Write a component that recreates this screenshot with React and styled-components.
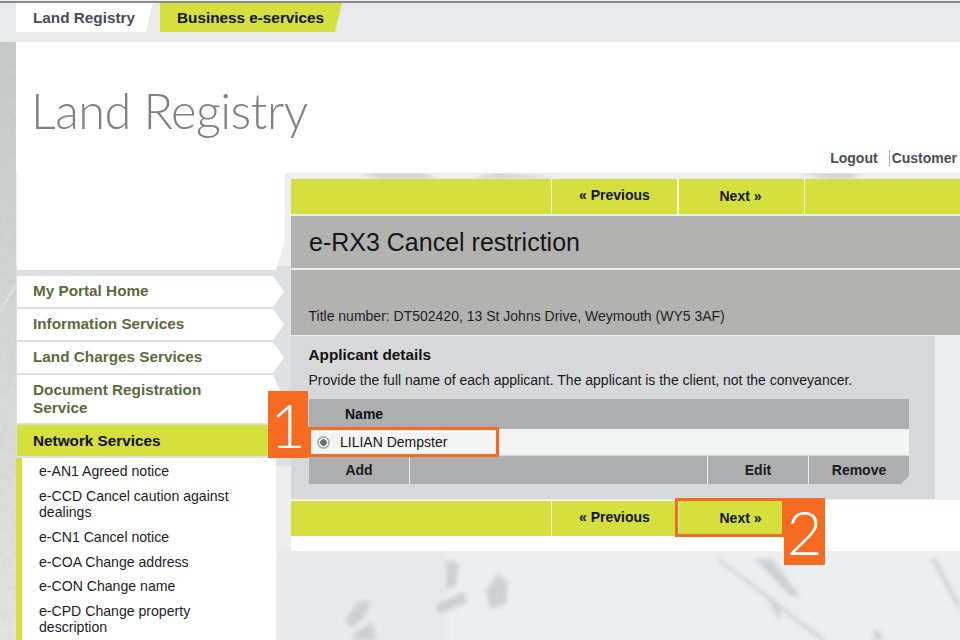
import React from 'react';
import styled, { createGlobalStyle } from 'styled-components';

const lime = '#d5df3e';
const orange = '#f66a21';
const band = '#b2b2b1';
const tableGrey = '#adaeb0';

const GlobalStyle = createGlobalStyle`
    html, body {
        margin: 0;
        height: 640px;
        overflow: hidden;
        background: #edeef0;
        font-family: "Liberation Sans", Arial, sans-serif;
    }
`;

const Texture = styled.svg`
    position: absolute;
    left: 0;
    top: 0;
    z-index: 0;
`;

const Page = styled.div`
    position: relative;
    z-index: 1;
    width: 960px;
    height: 640px;
    overflow: hidden;
`;

const TopBar = styled.div`
    height: 39px;
    margin-top: 1px;
    border-top: 2px solid #8c8c8c;
    padding-left: 16px;
    background: #e9eaec;
    display: flex;
    align-items: flex-start;
    gap: 7px;
    box-sizing: content-box;
`;

const Tab = styled.div`
    height: 29px;
    box-sizing: border-box;
    padding-left: 17px;
    width: ${p => (p.$active ? '182px' : '137px')};
    background: ${p => (p.$active ? lime : '#fff')};
    color: ${p => (p.$active ? '#111' : '#4a4c58')};
    font-size: 15.3px;
    font-weight: bold;
    line-height: 29px;
    white-space: nowrap;
    clip-path: polygon(0 0, 100% 0, calc(100% - 7px) 100%, 0 100%);
`;

const Header = styled.header`
    margin-left: 16px;
    height: 131px;
    background: #fff;
    display: flex;
    flex-direction: column;
    padding: 38px 3px 0 15px;
    box-sizing: border-box;
`;

const Logo = styled.div`
    font-family: Lato, "Open Sans", sans-serif;
    font-weight: 300;
    font-size: 48.7px;
    line-height: 60px;
    color: #808184;
    letter-spacing: -0.5px;
`;

const UserLinks = styled.div`
    margin-top: 10px;
    display: flex;
    justify-content: flex-end;
    align-items: center;
    font-size: 14px;
    font-weight: bold;
    color: #4c4e58;
    line-height: 16px;
`;

const UserLink = styled.span`
    padding-left: ${p => (p.$split ? '2px' : '0')};
    margin-left: ${p => (p.$split ? '11px' : '0')};
    border-left: ${p => (p.$split ? '1px solid #aaa' : '0')};
`;

const Content = styled.div`
    display: flex;
    margin-left: 17px;
`;

const Sidebar = styled.nav`
    width: 268px;
    flex: none;
    display: flex;
    flex-direction: column;
`;

const SideTop = styled.div`
    height: 97px;
    margin-bottom: 6px;
    background: #fff;
    clip-path: polygon(0 0, 100% 0, 100% 70%, 259px 100%, 0 100%);
`;

const NavItem = styled.div`
    min-height: 31px;
    box-sizing: border-box;
    margin-bottom: 2px;
    padding: ${p => (p.$active ? '7px 60px 5px 16px' : '6px 60px 6px 16px')};
    background: ${p => (p.$active ? lime : '#fff')};
    color: ${p => (p.$active ? '#111' : '#5b6b3d')};
    font-size: 15.3px;
    font-weight: bold;
    line-height: 18px;
    clip-path: polygon(0 0, 256px 0, 267px 50%, 256px 100%, 0 100%);
`;

const SubList = styled.ul`
    list-style: none;
    margin: 0 0 0 -1px;
    padding: 5px 30px 0 17px;
    width: 260px;
    box-sizing: border-box;
    background: #fff;
    border-left: 6px solid ${lime};
    height: 200px;
`;

const SubItem = styled.li`
    font-size: 14.1px;
    line-height: 16px;
    padding-bottom: 8.85px;
    color: #1d1d1f;
`;

const Main = styled.main`
    flex: 1;
    position: relative;
    padding: 6px 0 0 6px;
    min-width: 0;
`;

const Toolbar = styled.div`
    position: relative;
    height: 35px;
    width: ${p => (p.$short ? '513px' : 'auto')};
    background: ${lime};
    display: grid;
    grid-template-columns: 260px 126px 127px 1fr;
`;

const ToolCell = styled.div`
    border-left: ${p => (p.$first ? '0' : `${p.$wide ? 2 : 1}px solid #f6f8d8`)};
    padding-right: ${p => (p.$wide ? 2 : 0)}px;
    font-size: 14px;
    font-weight: bold;
    line-height: ${p => (p.$wide ? 35 : 33)}px;
    text-align: center;
    color: #141414;
`;

const TitleBand = styled.div`
    margin-top: 2px;
    height: 52px;
    background: ${band};
    padding-left: 18px;
    font-size: 25px;
    line-height: 52px;
    color: #161616;
`;

const InfoBand = styled.div`
    margin-top: 2px;
    height: 65px;
    background: ${band};
    padding: 38px 0 0 17.5px;
    box-sizing: border-box;
    font-size: 14px;
    line-height: 16px;
    color: #1f1f1f;
`;

const Panel = styled.section`
    margin-top: 1px;
    width: 644px;
    height: 163px;
    box-sizing: border-box;
    padding: 11px 26px 0 17.5px;
    background: #d7d8da;
`;

const PanelHeading = styled.h2`
    margin: 0;
    font-size: 15.3px;
    line-height: 16px;
    color: #111;
`;

const PanelText = styled.p`
    margin: 9px 0 11px;
    font-size: 14px;
    line-height: 16px;
    color: #1a1a1a;
    white-space: nowrap;
`;

const Table = styled.div`
    width: 600px;
    margin-left: 0.5px;
`;

const TableHead = styled.div`
    height: 30px;
    background: ${tableGrey};
    padding-left: 36px;
    font-size: 14px;
    font-weight: bold;
    line-height: 30px;
    color: #111;
`;

const TableRow = styled.div`
    position: relative;
    height: 26px;
    margin-bottom: 1px;
    background: #f3f5f4;
    display: flex;
    align-items: center;
    gap: 10px;
    padding-left: 8px;
    font-size: 14px;
    color: #161616;
`;

const Radio = styled.span`
    width: 13px;
    height: 13px;
    border-radius: 50%;
    background: radial-gradient(circle, #6f6f6f 0 3px, #eee 3.5px 4.5px, #b0b0b0 5px 6.5px);
`;

const TableFoot = styled.div`
    height: 28px;
    display: grid;
    grid-template-columns: 100px 298px 101px 101px;
    clip-path: polygon(0 0, 100% 0, 100% 20px, 592px 100%, 0 100%);
`;

const FootCell = styled.div`
    background: ${tableGrey};
    border-left: ${p => (p.$first ? '0' : '1px solid #eceded')};
    font-size: 14px;
    font-weight: bold;
    line-height: 28px;
    text-align: center;
    color: #1a1a1a;
`;

const BottomBlock = styled.div`
    margin-top: 1px;
    height: 51px;
    padding-top: 1px;
    box-sizing: border-box;
    background: #fff;
`;

const Highlight = styled.div`
    position: absolute;
    z-index: 3;
    box-sizing: border-box;
    border: 3px solid ${orange};
    left: ${p => p.$left}px;
    top: ${p => p.$top}px;
    width: ${p => p.$width}px;
    height: ${p => p.$height}px;
`;

const StepBadge = styled.div`
    position: absolute;
    z-index: 4;
    left: ${p => p.$left}px;
    top: ${p => p.$top}px;
    width: ${p => p.$width}px;
    height: 67px;
    background: ${orange};
    color: #fff;
    font-family: Lato, "Open Sans", sans-serif;
    font-weight: 300;
    font-size: 62px;
    line-height: 67px;
    text-align: center;
`;

const nav = [
    { label: 'My Portal Home' },
    { label: 'Information Services' },
    { label: 'Land Charges Services' },
    { label: 'Document Registration Service' },
    { label: 'Network Services', active: true },
];

const services = [
    'e-AN1 Agreed notice',
    'e-CCD Cancel caution against dealings',
    'e-CN1 Cancel notice',
    'e-COA Change address',
    'e-CON Change name',
    'e-CPD Change property description',
];

// aerial photo shapes seen around the panels
const marks = [
    'M446 561L459 562L456 586L446 590Z',
    'M436 604L464 592L468 602L450 610L438 614Z',
    'M345 620L358 602L371 600L366 616L352 628Z',
    'M486 590L498 574L508 582L506 604L490 609Z',
    'M356 632L372 622L376 640H352Z',
    'M716 559L720 559L826 640L820 640Z',
    'M755 559L772 559L800 596L790 596Z',
    'M931 559L936 559L960 604V612Z',
    'M768 596L776 600L782 618L776 616Z',
    'M874 628L880 632L884 640H874Z',
    'M360 173L420 173L440 179L380 179Z',
    'M500 173L560 179L470 179Z',
    'M800 173H860L850 179H830Z',
];

const BackgroundTexture = () =>
    <Texture width="960" height="640" viewBox="0 0 960 640" aria-hidden="true">
        <defs>
            <linearGradient id="strip" x1="0" y1="0" x2="0" y2="1">
                <stop offset="0" stopColor="#c6c7c7" />
                <stop offset="0.3" stopColor="#cfd0d0" />
                <stop offset="0.55" stopColor="#d6d7d7" />
                <stop offset="1" stopColor="#e2e3e3" />
            </linearGradient>
            <filter id="mottle" x="0" y="0" width="100%" height="100%">
                <feTurbulence type="fractalNoise" baseFrequency="0.12" numOctaves="3" seed="4" />
                <feColorMatrix values="0 0 0 0 0.5  0 0 0 0 0.5  0 0 0 0 0.5  1.2 0 0 0 -0.45" />
            </filter>
            <filter id="soft" x="-20%" y="-20%" width="140%" height="140%">
                <feGaussianBlur stdDeviation="2" />
            </filter>
        </defs>
        <rect width="960" height="640" fill="#edeef0" />
        <rect x="0" y="42" width="16" height="598" fill="url(#strip)" />
        <rect x="16" y="266" width="276" height="200" fill="#dfe0e1" />
        <g filter="url(#soft)">
            <rect x="276" y="551" width="170" height="95" fill="#e8e9ea" />
            <g fill="#cfd0d1">
                {marks.map(d => <path key={d} d={d} />)}
            </g>
        </g>
        <path d="M0 312L16 284" stroke="#e6e6e6" strokeWidth="2" opacity="0.6" />
        <rect x="0" y="42" width="16" height="598" filter="url(#mottle)" opacity="0.3" />
    </Texture>
;

export default function App() {
    return (
        <>
            <GlobalStyle />
            <BackgroundTexture />
            <Page>
                <TopBar>
                    <Tab>Land Registry</Tab>
                    <Tab $active>Business e-services</Tab>
                </TopBar>
                <Header>
                    <Logo>Land Registry</Logo>
                    <UserLinks>
                        <UserLink>Logout</UserLink>
                        <UserLink $split>Customer</UserLink>
                    </UserLinks>
                </Header>
                <Content>
                    <Sidebar>
                        <SideTop />
                        {nav.map(item => <NavItem key={item.label} $active={item.active}>{item.label}</NavItem>)}
                        <SubList>
                            {services.map(s => <SubItem key={s}>{s}</SubItem>)}
                        </SubList>
                    </Sidebar>
                    <Main>
                        <Toolbar>
                            <ToolCell $first />
                            <ToolCell>« Previous</ToolCell>
                            <ToolCell $wide>Next »</ToolCell>
                            <ToolCell />
                        </Toolbar>
                        <TitleBand>e-RX3 Cancel restriction</TitleBand>
                        <InfoBand>Title number: DT502420, 13 St Johns Drive, Weymouth (WY5 3AF)</InfoBand>
                        <Panel>
                            <PanelHeading>Applicant details</PanelHeading>
                            <PanelText>Provide the full name of each applicant. The applicant is the client, not the conveyancer.</PanelText>
                            <Table>
                                <TableHead>Name</TableHead>
                                <TableRow>
                                    <Radio />
                                    LILIAN Dempster
                                    <Highlight $left={-1} $top={-2} $width={191} $height={30} />
                                    <StepBadge $left={-41} $top={-38} $width={40}>1</StepBadge>
                                </TableRow>
                                <TableFoot>
                                    <FootCell $first>Add</FootCell>
                                    <FootCell />
                                    <FootCell>Edit</FootCell>
                                    <FootCell>Remove</FootCell>
                                </TableFoot>
                            </Table>
                        </Panel>
                        <BottomBlock>
                            <Toolbar $short>
                                <ToolCell $first />
                                <ToolCell>« Previous</ToolCell>
                                <ToolCell $wide>Next »</ToolCell>
                                <Highlight $left={384} $top={-3} $width={110} $height={39} />
                                <StepBadge $left={493} $top={-3} $width={41}>2</StepBadge>
                            </Toolbar>
                        </BottomBlock>
                    </Main>
                </Content>
            </Page>
        </>
    );
}
